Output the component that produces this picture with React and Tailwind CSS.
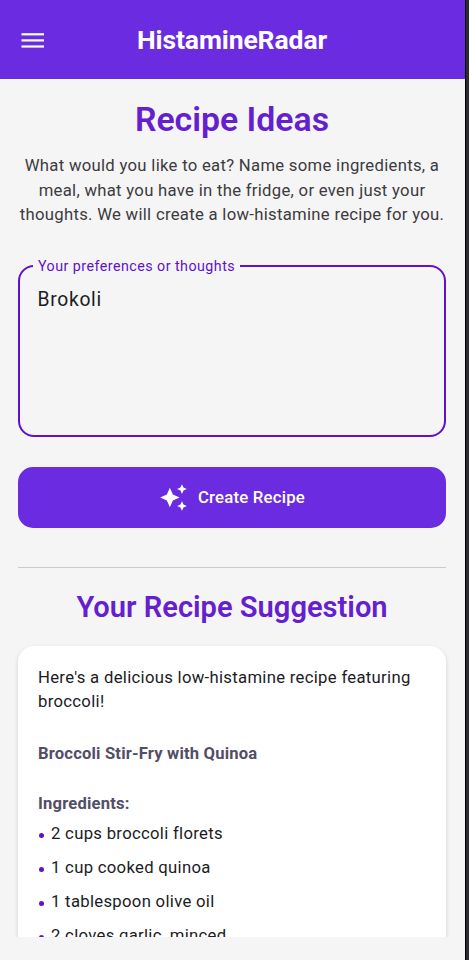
import { MdAutoAwesome } from 'react-icons/md';

const INGREDIENTS = [
    '2 cups broccoli florets',
    '1 cup cooked quinoa',
    '1 tablespoon olive oil',
    '2 cloves garlic, minced',
];

function Header() {
    return (
        <header className="flex h-[79px] shrink-0 items-center bg-[#6b2be1] text-white">
            <button type="button" aria-label="Menu" className="ml-[21px] w-[23px] pt-[2px]">
                <svg viewBox="0 0 23 16" className="h-4 w-[23px] fill-white">
                    <rect x="0.5" y="0.2" width="22.5" height="2.2" />
                    <rect x="0.5" y="6.3" width="22.5" height="2.2" />
                    <rect x="0.5" y="12.4" width="22.5" height="2.2" />
                </svg>
            </button>
            <h1 className="mr-[45px] flex-1 text-center text-[26.5px] font-bold tracking-[-0.1px]">
                HistamineRadar
            </h1>
        </header>
    );
}

function PreferencesField() {
    return (
        <fieldset className="mt-[26px] h-[183px] rounded-[16px] border-2 border-[#6011c9] px-[11px]">
            <legend className="ml-[2px] px-[5px] text-[14.25px] leading-[24px] tracking-[0.47px] text-[#6011c9]">
                Your preferences or thoughts
            </legend>
            <textarea
                defaultValue="Brokoli"
                className="mt-[7px] block h-[130px] w-full resize-none bg-transparent px-[6.5px] text-[19.3px] leading-[29px] tracking-[0.7px] text-[#1c1b1f] outline-none"
            />
        </fieldset>
    );
}

function RecipeCard() {
    return (
        <article className="mt-[21px] h-[340px] rounded-[16px] bg-white px-[20px] pt-[20px] text-[16.7px] leading-[24.5px] tracking-[0.3px] text-[#1c1b1f] shadow-[0_2px_4px_rgba(0,0,0,0.16)]">
            <p>
                Here's a delicious low-histamine recipe featuring
                <br />
                broccoli!
            </p>
            <h3 className="mt-[27px] text-[16.6px] font-bold tracking-[0.18px] text-[#524e66]">
                Broccoli Stir-Fry with Quinoa
            </h3>
            <h3 className="mt-[26px] text-[16.6px] font-bold tracking-[0.18px] text-[#524e66]">
                Ingredients:
            </h3>
            <ul className="mt-[5px] flex flex-col gap-[9.6px]">
                {INGREDIENTS.map((item) => (
                    <li key={item} className="flex items-center">
                        <span className="mt-[2px] mr-[7px] ml-[1px] size-[5px] rounded-full bg-[#6011c9]" />
                        {item}
                    </li>
                ))}
            </ul>
        </article>
    );
}

export default function App() {
    return (
        <div className="flex h-[960px] w-[469px] overflow-hidden bg-[#f5f5f5] font-[Roboto,sans-serif]">
            <div className="flex min-w-0 flex-1 flex-col">
                <Header />
                <main className="h-[858px] overflow-hidden px-[18px] pr-[19px]">
                    <h2 className="mt-[20px] text-center text-[33.8px] leading-[42px] font-semibold text-[#6420cf]">
                        Recipe Ideas
                    </h2>
                    <p className="mt-[13px] text-center text-[16.7px] leading-[24.6px] tracking-[0.29px] whitespace-nowrap text-[#3c3b3f]">
                        What would you like to eat? Name some ingredients, a
                        <br />
                        meal, what you have in the fridge, or even just your
                        <br />
                        thoughts. We will create a low-histamine recipe for you.
                    </p>
                    <PreferencesField />
                    <button
                        type="button"
                        className="mt-[30px] flex h-[61px] w-full items-center justify-center gap-[10px] rounded-[15px] bg-[#6b2be1] text-[16.8px] font-medium tracking-[0.2px] text-white"
                    >
                        <MdAutoAwesome className="size-[29px]" />
                        Create Recipe
                    </button>
                    <hr className="mt-[39px] border-[#cbcacd]" />
                    <h2 className="mt-[21px] text-center text-[29.1px] leading-[36px] font-semibold text-[#6420cf]">
                        Your Recipe Suggestion
                    </h2>
                    <RecipeCard />
                </main>
            </div>
            {/* device edge */}
            <div className="w-[4px] border-l border-black bg-[#2c2b30]" />
        </div>
    );
}
